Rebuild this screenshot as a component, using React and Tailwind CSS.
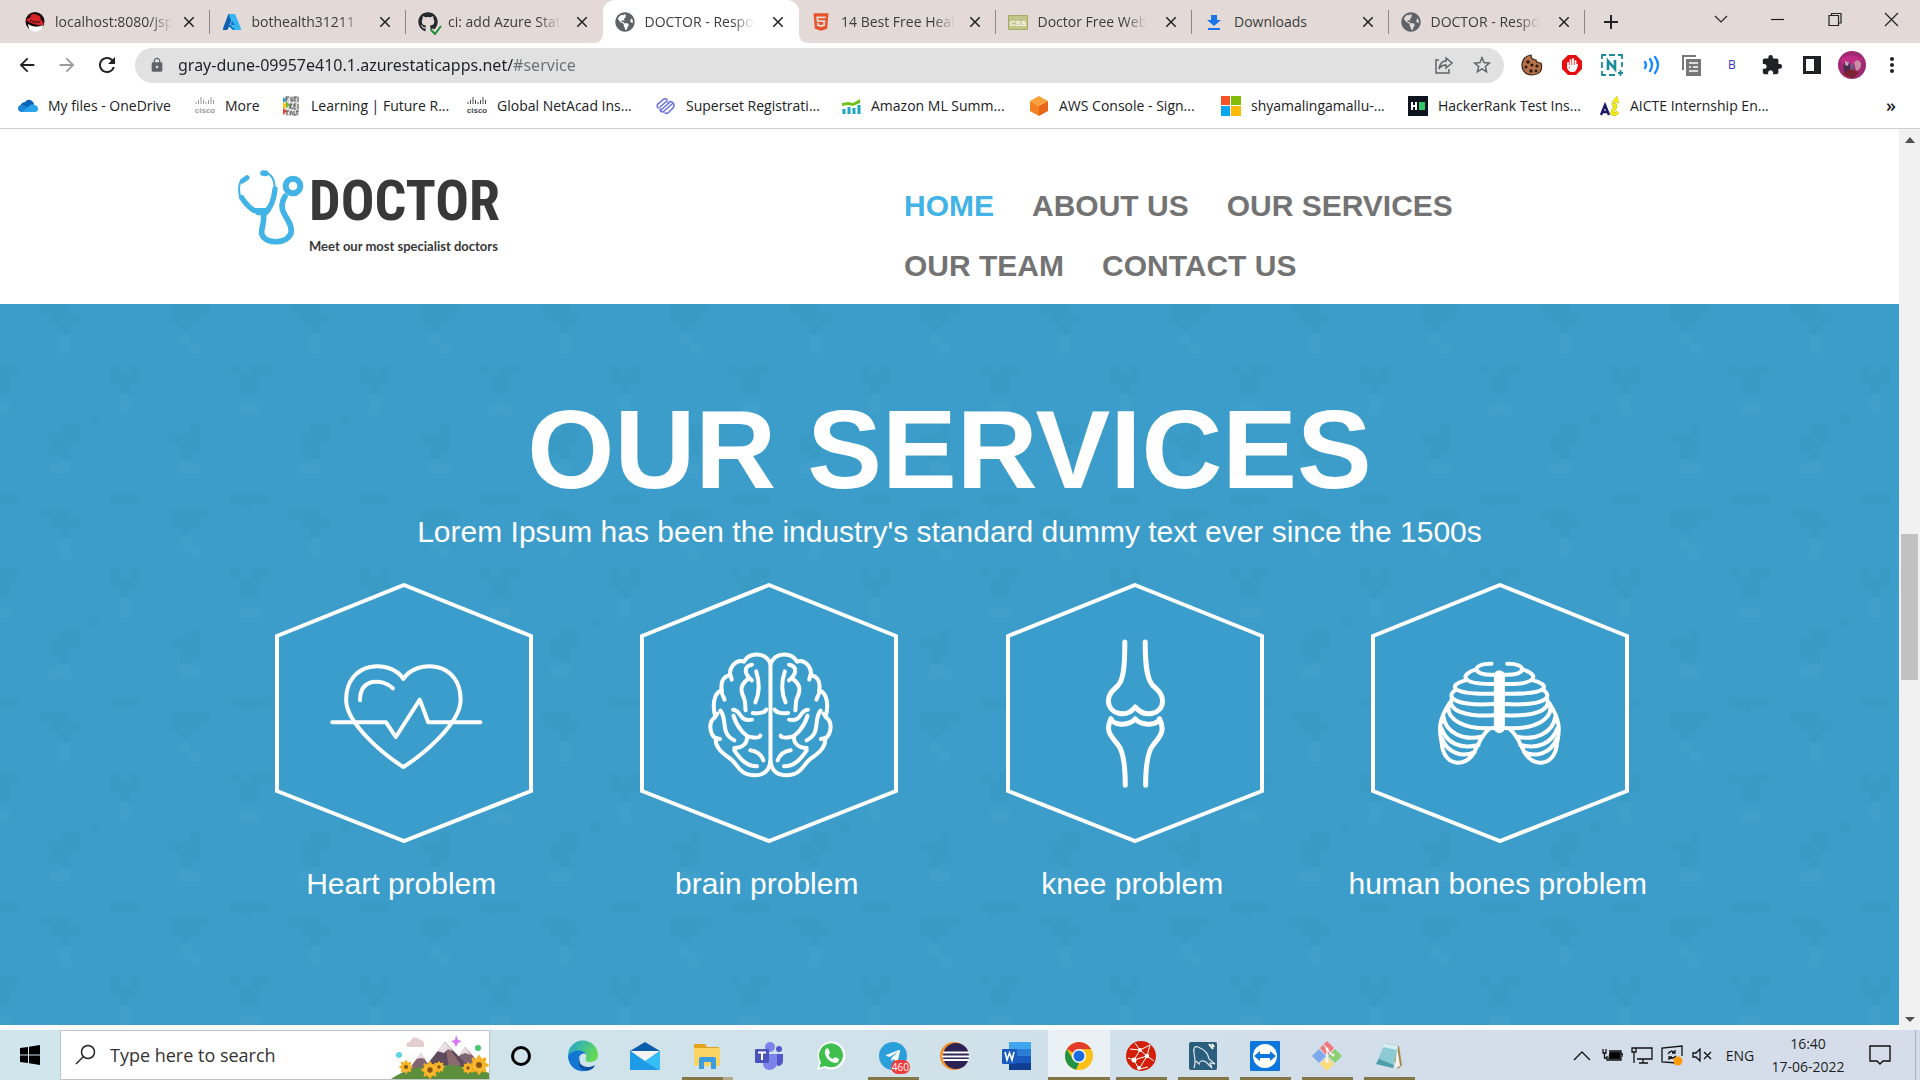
import React from "react";
import { FaTelegramPlane, FaHtml5, FaGlobeAmericas, FaGithub } from "react-icons/fa";
import { MdArrowBack, MdArrowForward, MdRefresh, MdLock, MdExtension, MdMoreVert, MdStarBorder, MdClose, MdAdd } from "react-icons/md";

/* ---------- small favicons ---------- */

const Globe = () => <FaGlobeAmericas className="h-5 w-5 text-[#5f6368]" />;

const RedHat = () => (
  <svg viewBox="0 0 20 20" className="h-5 w-5">
    <circle cx="10" cy="9.5" r="9.5" fill="#1b0a0a" />
    <path d="M3 12Q10 17 18 13L17 17Q10 22 4 17Z" fill="#fff" />
    <path d="M1 8Q2 6 5 6L6 3Q9 1 12 3L15 4L16 8Q20 11 18 13Q9 14 1 8Z" fill="#d8232a" />
    <path d="M5 8Q9 11 15 10" stroke="#1b0a0a" fill="none" strokeWidth="1" />
  </svg>
);

const Azure = () => (
  <svg viewBox="0 0 20 20" className="h-5 w-5">
    <path d="M7 2H12L6 17Q5.500 18 4.500 18H1.500Q0.500 18 1 16.500L6 3Q6.300 2 7 2Z" fill="#0f5fae" />
    <path d="M12 2H13L19 16.500Q19.500 18 18 18H13Q12 18 11.500 17L7 3Q7 2 8 2Z" fill="#35b4f2" />
    <path d="M5.500 13H13L10 9L8.500 12L13 18H11Z" fill="#0078d4" />
  </svg>
);

const GithubCheck = () => (
  <span className="relative block h-5 w-5">
    <FaGithub className="h-5 w-5 text-[#24292f]" />
    <svg viewBox="0 0 12 12" className="absolute -right-1 -bottom-1 h-3 w-3">
      <path d="M1 6L5 10L11 2" fill="none" stroke="#e3dad7" strokeWidth="5" />
      <path d="M1 6L5 10L11 2" fill="none" stroke="#1a8f36" strokeWidth="2" />
    </svg>
  </span>
);

const Html5 = () => <FaHtml5 className="h-5 w-5 text-[#e8532b]" />;

const CssBadge = () => (
  <svg viewBox="0 0 20 20" className="h-5 w-5">
    <rect y="3" width="20" height="15" rx="1" fill="#a9ab62" />
    <rect x="1" y="4" width="18" height="13" fill="#c3c48a" />
    <text x="10" y="14" fontSize="8" fontWeight="700" textAnchor="middle" fill="#fff" fontFamily="Liberation Sans, sans-serif">CSS</text>
  </svg>
);

const DownloadIcon = () => (
  <svg viewBox="0 0 20 20" className="h-5 w-5" fill="#1a73e8">
    <path d="M7 3H13V8H17L10 14L3 8H7Z" />
    <rect x="4" y="16" width="12" height="2" />
  </svg>
);

const tabs = [
  { title: "localhost:8080/jsp", Icon: RedHat },
  { title: "bothealth31211 -", Icon: Azure },
  { title: "ci: add Azure Stat", Icon: GithubCheck },
  { title: "DOCTOR - Respo", Icon: Globe, active: true },
  { title: "14 Best Free Heal", Icon: Html5 },
  { title: "Doctor Free Web", Icon: CssBadge },
  { title: "Downloads", Icon: DownloadIcon, full: true },
  { title: "DOCTOR - Respo", Icon: Globe },
];

const OneDrive = () => (
  <svg viewBox="0 0 20 20" className="h-5 w-5">
    <path d="M3 13Q1 7 7 6Q10 2 14 5Q16 6 16 9L9 14Z" fill="#0a63b8" />
    <path d="M4 16Q0 16 0 12Q1 8 6 9L14 15Z" fill="#1a84d8" />
    <path d="M10 11Q13 7 17 9Q20 10 20 13Q20 16 17 16H4Z" fill="#2aa4ea" />
  </svg>
);

const Cisco = ({ tone }) => (
  <svg viewBox="0 0 20 20" className="h-5 w-5" fill={tone} stroke={tone}>
    <path d="M1 6V8M3.500 4V8M6 1V8M8.500 4V8M11 6V8M13.500 4V8M16 1V8M18.500 4V8" strokeWidth="1" />
    <text x="10" y="17" fontSize="8" fontWeight="700" textAnchor="middle" stroke="none" fontFamily="Liberation Sans, sans-serif">cisco</text>
  </svg>
);

const FutureReady = () => (
  <svg viewBox="0 0 20 20" className="h-5 w-5">
    <rect x="4" width="14" height="20" fill="#ddd" />
    <path d="M2 1L5 4L2 7Z" fill="#1f9ad6" />
    <path d="M2 6L8 10L2 13Z" fill="#f6c515" />
    <path d="M2 12L6 15L2 19Z" fill="#e5432f" />
    <path d="M5 5L9 9L5 12Z" fill="#74b83e" />
    <path d="M5 1V6M5 1H8M5 3H7M10 1V5H12V1M14 1V6M13 1H16M17 1V6M9 13V8H11L9 11L12 13M13 8V13H15M13 8H15M13 10H15M17 8V13M5 15H8M6 15V19M9 19L10 15L12 19M13 15V19H15M16 15V19M15 15H18" fill="none" stroke="#555" strokeWidth="1" />
  </svg>
);

const Superset = () => (
  <svg viewBox="0 0 20 20" className="h-5 w-5" fill="none" stroke="#6b74e0" strokeWidth="1.600" strokeLinecap="round">
    <path d="M2 12Q0 9 3 7L8 3Q11 2 11 5L4 11M5 14L14 6M7 16L16 8M4 13Q4 16 7 16M9 17Q11 18 13 16L17 12Q19 9 17 7Q15 4 12 7" />
  </svg>
);

const AmazonMl = () => (
  <svg viewBox="0 0 20 20" className="h-5 w-5">
    <path d="M1 10V7L7 6L12 7L19 3V7L12 10L7 9Z" fill="#6fc31c" />
    <path d="M3 13V18M8 11V18M13 12V18M18 9V18" stroke="#1ba6c4" strokeWidth="3" />
  </svg>
);

const Aws = () => (
  <svg viewBox="0 0 20 20" className="h-5 w-5">
    <path d="M10 0L19 5L10 10L1 5Z" fill="#f9a13a" />
    <path d="M1 5L10 10V20L1 15Z" fill="#f58220" />
    <path d="M19 5L10 10V20L19 15Z" fill="#e8641b" />
  </svg>
);

const Microsoft = () => (
  <svg viewBox="0 0 20 20" className="h-5 w-5">
    <rect width="9" height="9" fill="#f35325" />
    <rect x="10" width="10" height="9" fill="#81bc06" />
    <rect y="10" width="9" height="10" fill="#05a6f0" />
    <rect x="10" y="10" width="10" height="10" fill="#ffba08" />
  </svg>
);

const HackerRank = () => (
  <svg viewBox="0 0 20 20" className="h-5 w-5">
    <rect width="20" height="20" fill="#0e141e" />
    <path d="M4 6V14M8 6V14M4 10H8" stroke="#fff" strokeWidth="2" />
    <rect x="11" y="6" width="6" height="8" fill="#2ec866" />
  </svg>
);

const Aicte = () => (
  <svg viewBox="0 0 20 20" className="h-5 w-5">
    <path d="M1 19L5 9L9 19M3 16H8" fill="none" stroke="#1c1763" strokeWidth="2.500" />
    <path d="M17 0L19 7L12 6Z" fill="#f7ec13" stroke="#c9bd12" strokeWidth="0.500" />
    <path d="M12 9Q17 8 15 12Q10 18 13 18Q15 19 18 16" fill="none" stroke="#b9ae18" strokeWidth="3.500" />
    <path d="M12 9Q17 8 15 12Q10 18 13 18Q15 19 18 16" fill="none" stroke="#f7ec13" strokeWidth="2.500" />
  </svg>
);

const bookmarks = [
  { label: "My files - OneDrive", icon: <OneDrive />, width: "w-[177px]" },
  { label: "More", icon: <Cisco tone="#9a9a9a" />, width: "w-[86px]" },
  { label: "Learning | Future R...", icon: <FutureReady />, width: "w-[186px]" },
  { label: "Global NetAcad Ins...", icon: <Cisco tone="#4a4a4a" />, width: "w-[189px]" },
  { label: "Superset Registrati...", icon: <Superset />, width: "w-[185px]" },
  { label: "Amazon ML Summ...", icon: <AmazonMl />, width: "w-[188px]" },
  { label: "AWS Console - Sign...", icon: <Aws />, width: "w-[192px]" },
  { label: "shyamalingamallu-...", icon: <Microsoft />, width: "w-[187px]" },
  { label: "HackerRank Test Ins...", icon: <HackerRank />, width: "w-[192px]" },
  { label: "AICTE Internship En...", icon: <Aicte />, width: "w-[187px]" },
];

/* ---------- browser chrome ---------- */

function Tab({ title, Icon, active, full, divider }) {
  return (
    <div className={active ? "relative flex min-w-0 flex-1 items-center rounded-t-xl bg-white pl-3" : "relative flex min-w-0 flex-1 items-center pl-3"}>
      {active && (
        <>
          <svg viewBox="0 0 10 10" className="absolute bottom-0 -left-[10px] h-[10px] w-[10px]"><path d="M10 0V10H0Q10 10 10 0Z" fill="#fff" /></svg>
          <svg viewBox="0 0 10 10" className="absolute -right-[10px] bottom-0 h-[10px] w-[10px]"><path d="M0 0V10H10Q0 10 0 0Z" fill="#fff" /></svg>
        </>
      )}
      <button className="flex h-full min-w-0 flex-1 items-center gap-[10px] text-left">
        <span className="shrink-0"><Icon /></span>
        <span className={full ? "text-[14px] whitespace-nowrap text-[#3c3c3c]" : "text-[14px] whitespace-nowrap text-[#3c3c3c] [mask-image:linear-gradient(to_right,#000_80%,transparent)]"}>{title}</span>
      </button>
      <button aria-label="Close tab" className="flex h-5 w-5 shrink-0 items-center justify-center text-[#202124]">
        <MdClose className="h-[18px] w-[18px]" />
      </button>
      <span className={divider ? "ml-[10px] h-6 w-px bg-[#8d8784]" : "ml-[10px] h-6 w-px"} />
    </div>
  );
}

function TabStrip() {
  return (
    <div className="flex h-[43px] bg-[#e3dad7] pl-[13px]">
      <div className="flex max-w-[1572px] min-w-0 flex-1">
        {tabs.map((t, i) => (
          <Tab key={i} {...t} divider={i !== 2 && i !== 3} />
        ))}
      </div>
      <button aria-label="New tab" className="flex w-[52px] items-center justify-center text-[#202124]"><MdAdd className="h-6 w-6" /></button>
      <div className="ml-auto flex h-[38px] items-center text-black">
        {[
          ["Search tabs", "M3 6L9 12L15 6"],
          ["Minimize", "M2 9.500H15"],
          ["Restore", "M3 5.500H12.500V15.500H3ZM5.500 5V3.500H15V13H13"],
          ["Close", "M2 3L15 16M15 3L2 16"],
        ].map(([name, d]) => (
          <button key={name} aria-label={name} className="flex h-full w-[57px] items-center justify-center">
            <svg viewBox="0 0 18 19" className="h-[19px] w-[18px]" fill="none" stroke="#222" strokeWidth="1.200"><path d={d} /></svg>
          </button>
        ))}
      </div>
    </div>
  );
}

const extensions = [
  ["Cookies", <svg viewBox="0 0 22 22" className="h-[22px] w-[22px]"><path d="M10 1Q10 6 15 6Q15 9 20 9Q23 20 11 21Q1 20 1 11Q2 2 10 1Z" fill="#b8734a" stroke="#3b2115" strokeWidth="1.200" /><g fill="#2c1810"><circle cx="7" cy="8" r="1.800" /><circle cx="5" cy="13" r="1.500" /><circle cx="11" cy="11" r="1.600" /><circle cx="10" cy="17" r="1.700" /><circle cx="16" cy="12" r="1.600" /><circle cx="15" cy="17" r="1.400" /></g></svg>],
  ["Ad block", <svg viewBox="0 0 22 22" className="h-[22px] w-[22px]"><path d="M7 1H15L21 7V15L15 21H7L1 15V7Z" fill="#e60f0f" /><path d="M7 9V14Q9 18 13 17Q15 16 16 11M9.500 12V6M12 12V5M14.500 12V7" stroke="#fff" strokeWidth="1.800" strokeLinecap="round" fill="none" /><path d="M8 11H15V15L12 17L9 16Z" fill="#fff" /></svg>],
  ["Capture", <svg viewBox="0 0 22 22" className="h-[22px] w-[22px]" fill="none" stroke="#1b8a9c" strokeWidth="1.800"><path d="M1 5V1H5M8 1H14M17 1H21V5M21 8V13M1 8V14M1 17V21H5M8 21H14M17 19H22M19.500 16V22" /><path d="M7 16V7L14 15V6" strokeWidth="2.600" /></svg>],
  ["Read aloud", <svg viewBox="0 0 22 22" className="h-[22px] w-[22px]" fill="none" stroke="#1a8cff" strokeWidth="2.400" strokeLinecap="round"><path d="M4 8Q6 11 4 14M9 5Q13 11 9 17M14 3Q20 11 14 19" /></svg>],
  ["Clipboard", <svg viewBox="0 0 22 22" className="h-[22px] w-[22px]"><path d="M2 16V2H15" fill="none" stroke="#777" strokeWidth="2" /><rect x="5" y="5" width="15" height="17" fill="#777" /><path d="M8 9H17M12 13H17M8 17H17M8 13H10" stroke="#fff" strokeWidth="1.500" /></svg>],
  ["B", <span className="text-xs text-[#3d32c4]">B</span>],
  ["Extensions", <MdExtension className="h-[22px] w-[22px] text-[#202124]" />],
  ["Side panel", <svg viewBox="0 0 20 20" className="h-5 w-5"><path d="M1 1H19V19H1ZM4 4V16H12V4Z" fill="#202124" fillRule="evenodd" /></svg>],
  ["Profile", <svg viewBox="0 0 28 28" className="h-7 w-7"><circle cx="14" cy="14" r="14" fill="#a02a72" /><path d="M3 8Q10 1 25 8L20 14L4 14Z" fill="#c02b86" /><path d="M6 12Q10 8 12 13V20L8 24Q4 18 6 12Z" fill="#4a2a4f" /><path d="M16 11Q20 7 23 12Q24 18 18 20Z" fill="#c78ea4" /><path d="M13 12L16 14L15 20L12 21Z" fill="#6d5a86" /><path d="M5 22L12 18L21 21L16 27Q9 27 5 22Z" fill="#7c2233" /><path d="M7 10L11 11L10 15L7 14Z" fill="#c9a0b8" /></svg>],
  ["Menu", <MdMoreVert className="h-6 w-6 text-[#202124]" />],
];

function Toolbar() {
  return (
    <div className="flex h-[44px] items-center bg-white pr-2 pl-[7px]">
      <button aria-label="Back" className="flex w-10 justify-center"><MdArrowBack className="h-[22px] w-[22px] text-[#202124]" /></button>
      <button aria-label="Forward" className="flex w-10 justify-center"><MdArrowForward className="h-[22px] w-[22px] text-[#9b9b9b]" /></button>
      <button aria-label="Reload" className="flex w-10 justify-center"><MdRefresh className="h-6 w-6 text-[#202124]" /></button>
      <div className="ml-2 flex h-[35px] flex-1 items-center rounded-full bg-[#e1e1e1] pr-1 pl-[14px]">
        <MdLock className="h-4 w-4 shrink-0 text-[#5f6368]" />
        <input
          aria-label="Address"
          defaultValue="gray-dune-09957e410.1.azurestaticapps.net/#service"
          className="ml-[13px] min-w-0 flex-1 bg-linear-to-r from-[#202124] from-[335px] to-[#6b6f74] to-[335px] bg-clip-text font-['Noto_Sans',sans-serif] text-[16px] text-transparent outline-none"
        />
        <button aria-label="Share" className="flex w-10 justify-center">
          <svg viewBox="0 0 20 20" className="h-5 w-5" fill="none" stroke="#5f6368" strokeWidth="1.500"><path d="M5 5H2V18H15V14M12 3L18 8L12 13V10Q7 10 5 14Q6 6 12 6Z" /></svg>
        </button>
        <button aria-label="Bookmark" className="flex w-9 justify-center"><MdStarBorder className="h-[22px] w-[22px] shrink-0 text-[#5f6368]" /></button>
      </div>
      <div className="ml-2 flex items-center">
        {extensions.map(([name, icon]) => (
          <button key={name} aria-label={name} className="flex w-10 items-center justify-center">{icon}</button>
        ))}
      </div>
    </div>
  );
}

function Bookmarks() {
  return (
    <div className="flex h-[42px] items-center border-b border-[#cfcfcf] bg-white pr-6 pb-1 pl-[18px] text-[14px] text-[#202124]">
      {bookmarks.map((b) => (
        <a key={b.label} href="#service" className={"flex shrink-0 items-center gap-[10px] whitespace-nowrap " + b.width}>
          {b.icon}
          {b.label}
        </a>
      ))}
      <button aria-label="More bookmarks" className="ml-auto text-[18px] font-semibold">»</button>
    </div>
  );
}

/* ---------- site ---------- */

function Logo() {
  return (
    <a href="#home" className="flex gap-1">
      <svg viewBox="108 115 204 234" className="h-[78px] w-[68px]" fill="none" stroke="#41b3e6" strokeLinecap="round" strokeLinejoin="round">
        <path d="M128 147Q108 160 117 200" strokeWidth="6" />
        <path d="M124 154L138 144" strokeWidth="15" />
        <path d="M190 128Q222 135 221 178" strokeWidth="6" />
        <path d="M186 130L194 131" strokeWidth="17" />
        <path d="M122 204Q140 232 160 243H196Q216 230 222 178" strokeWidth="16" />
        <path d="M162 240Q178 252 206 240L196 252H170Z" strokeWidth="10" fill="#41b3e6" />
        <path d="M188 258C190 285 178 300 183 315C195 344 258 344 270 310C278 268 222 250 252 200" strokeWidth="17" />
        <circle cx="276" cy="169" r="22" strokeWidth="18" />
      </svg>
      <span className="flex flex-col text-[#383838]">
        <span className="font-['Roboto_Condensed','Open_Sans_Condensed','Liberation_Sans_Narrow','Roboto',sans-serif] text-[56px] leading-[66px] font-bold">DOCTOR</span>
        <span className="font-['Lato',sans-serif] text-[13px] leading-[24px] font-bold">Meet our most specialist doctors</span>
      </span>
    </a>
  );
}

function SiteHeader() {
  return (
    <header className="bg-white">
      <div className="mx-auto flex h-[175px] max-w-[1425px] items-start justify-between">
        <div className="pt-[39px]"><Logo /></div>
        <nav className="flex w-full max-w-[758px] flex-wrap gap-x-[38px] pt-[47px] text-[30px] leading-[60px] font-bold text-[#737373]">
          <a href="#home" className="text-[#41b3e6]">HOME</a>
          <a href="#about">ABOUT US</a>
          <a href="#service" className="mr-40">OUR SERVICES</a>
          <a href="#team">OUR TEAM</a>
          <a href="#contact">CONTACT US</a>
        </nav>
      </div>
    </header>
  );
}

function PatternBackdrop() {
  return (
    <svg className="absolute inset-0 h-full w-full" aria-hidden="true">
      <defs>
        <pattern id="flowers" width="250" height="204" patternUnits="userSpaceOnUse">
          <g fill="#3a9ac6">
            <path d="M40 0H70V10H80V20H70V30H60V20H50V10H40Z" />
            <path d="M170 0H210V10H200V20H190V25H180V20H170Z" />
            <path d="M110 60H120V70H130V60H140V80H130V90H120V80H110Z" />
            <path d="M0 60H20V70H10V90H0Z M230 60H240V70H250V90H240V70H230Z" />
            <path d="M90 110H100V120H90Z" />
            <path d="M60 120H80V140H70V155H60V150H50V130H60Z" />
            <path d="M190 120H200V150H190V155H180V140H170V130H190Z" />
            <path d="M0 190H20V200H0Z M110 190H140V200H110Z M230 190H250V200H230Z M240 200H250V203H240Z" />
          </g>
          <g fill="#409fcb">
            <path d="M60 30H70V50H60Z M180 30H190V40H180Z M190 40H200V50H190Z M120 90H130V110H120Z M0 100H10V110H0Z M240 100H250V110H240Z" />
            <path d="M50 160H60V156H70V170H50Z M180 156H190V160H200V170H180Z" />
          </g>
        </pattern>
      </defs>
      <rect width="100%" height="100%" fill="url(#flowers)" />
    </svg>
  );
}

const thick = { vectorEffect: "non-scaling-stroke" };

const HeartDrawing = () => (
  <g transform="scale(0.4209 0.3333) translate(-36 -40)">
    <path style={thick} d="M341 328C312 268 205 272 205 390C205 462 296 556 341 592C386 556 477 462 477 390C477 272 370 268 341 328Z" />
    <path style={thick} d="M172 458H300L323 502L380 390L400 458H524M238 392C238 325 290 325 316 356" />
  </g>
);

const BrainHalf = () => (
  <>
    <path style={thick} d="M1216 282C1203 245 1165 248 1153 276C1134 268 1118 292 1120 317C1100 320 1098 345 1100 362C1080 370 1078 410 1085 442C1068 455 1070 490 1086 507C1084 540 1110 556 1125 572C1140 590 1145 617 1178 617C1205 617 1214 595 1216 575" />
    <path style={thick} d="M1120 312L1124 330M1100 360C1098 375 1105 380 1107 390M1085 440L1090 432M1086 505L1096 508" />
    <path style={thick} d="M1172 285C1150 290 1155 315 1172 332M1166 325C1142 345 1145 365 1153 385C1158 400 1155 410 1157 422M1182 305C1190 335 1190 370 1180 398" />
    <path style={thick} d="M1174 430C1190 432 1203 428 1206 420M1127 420C1147 420 1140 457 1172 450M1128 438C1135 470 1155 500 1168 502C1180 505 1190 505 1192 498M1160 500C1162 520 1150 535 1130 535" />
    <path style={thick} d="M1097 423C1115 450 1095 490 1130 512M1130 542C1145 570 1160 590 1184 590M1168 542C1185 545 1195 558 1199 572" />
  </>
);

const BrainDrawing = () => (
  <g transform="scale(0.4209 0.3333) translate(-906 -40)">
    <BrainHalf />
    <g transform="translate(2432 0) scale(-1 1)"><BrainHalf /></g>
    <path style={thick} d="M1216 280V580" />
  </g>
);

const KneeDrawing = () => (
  <g transform="scale(0.4337 0.3333) translate(-60 -40)">
    <path style={thick} strokeWidth="5" d="M334 217C334 290 331 330 318 348C303 366 296 375 296 395C298 432 336 448 358 412C382 448 420 432 421 395C421 375 414 366 399 348C385 330 381 290 381 217" />
    <path style={thick} strokeWidth="5" d="M335 647C335 590 331 545 318 525C303 500 288 485 302 447C306 466 342 472 358 448C374 472 412 466 414 447C428 485 415 500 400 525C386 545 382 590 382 647" />
  </g>
);

const RibHalf = () => (
  <path style={thick} d="M1182 282C1138 280 1132 318 1188 315M1145 300C1112 312 1105 345 1188 343M1122 332C1083 345 1080 375 1188 372M1100 360C1070 385 1105 410 1188 403M1090 388C1080 420 1120 442 1188 437M1083 410C1078 445 1115 482 1188 475M1085 400C1060 450 1060 480 1067 520C1070 590 1125 600 1145 540C1155 515 1160 495 1178 476M1071 440C1075 490 1120 515 1160 500M1066 475C1078 520 1110 540 1152 526M1067 505C1080 550 1115 565 1143 547" />
);

const RibsDrawing = () => (
  <g transform="scale(0.4337 0.3333) translate(-904 -40)" strokeWidth="4">
    <RibHalf />
    <g transform="translate(2400 0) scale(-1 1)"><RibHalf /></g>
    <path style={thick} strokeWidth="11" d="M1200 318V474" />
  </g>
);

const services = [
  { label: "Heart problem", Drawing: HeartDrawing },
  { label: "brain problem", Drawing: BrainDrawing },
  { label: "knee problem", Drawing: KneeDrawing },
  { label: "human bones problem", Drawing: RibsDrawing },
];

function Services() {
  return (
    <section className="relative bg-[#3c9dca] pt-[84px] pb-[121px] text-center text-white">
      <PatternBackdrop />
      <div className="relative">
        <h1 className="text-[112px] leading-[124px] font-bold">OUR SERVICES</h1>
        <p className="text-[30px] leading-[40px]">Lorem Ipsum has been the industry's standard dummy text ever since the 1500s</p>
        <ul className="mx-auto mt-[31px] grid max-w-[1462px] grid-cols-4">
          {services.map(({ label, Drawing }) => (
            <li key={label} className="flex flex-col items-center">
              <svg viewBox="0 0 258 260" className="ml-[5px] h-[260px] w-[258px]" fill="none" stroke="#fff" strokeWidth="4" strokeLinecap="round" strokeLinejoin="round">
                <path d="M129 2L256 53V208L129 258L2 208V53Z" fill="#3a9dcb" strokeWidth="4" strokeLinejoin="miter" />
                <Drawing />
              </svg>
              <h2 className="mt-[21px] text-[30px] leading-[40px]">{label}</h2>
            </li>
          ))}
        </ul>
      </div>
    </section>
  );
}

function Scrollbar() {
  return (
    <div className="flex w-[21px] shrink-0 flex-col items-center bg-[#f1f1f1]">
      <svg viewBox="0 0 20 20" className="h-5 w-5"><path d="M5 14L10 8L15 14Z" fill="#505050" /></svg>
      <div className="mt-[385px] h-[146px] w-[17px] bg-[#c1c1c1]" />
      <svg viewBox="0 0 20 20" className="mt-auto h-5 w-5"><path d="M5 7L10 12L15 7Z" fill="#505050" /></svg>
    </div>
  );
}

/* ---------- taskbar ---------- */

const Edge = () => (
  <svg viewBox="0 0 32 32" className="h-8 w-8">
    <defs>
      <linearGradient id="edgeTop" x1="0" y1="0" x2="1" y2="0.500"><stop offset="0" stopColor="#1fa2dc" /><stop offset="1" stopColor="#62d957" /></linearGradient>
    </defs>
    <path d="M1 16A15 15 0 0 1 31 15C31 20 27 22 23 22C19 22 18 20 19 18C22 10 6 8 1 16Z" fill="url(#edgeTop)" />
    <path d="M1 16C6 8 17 10 19 14C15 12 11 16 12 21C13 28 20 31 24 29C10 36 1 25 1 16Z" fill="#1276d3" />
    <path d="M13 17C10 25 19 30 28 25C26 31 18 32 15 29C11 26 11 20 13 17Z" fill="#0d4f9e" />
  </svg>
);

const Mail = () => (
  <svg viewBox="0 0 30 30" className="h-[30px] w-[30px]">
    <path d="M0 10L15 1L30 10V14H0Z" fill="#0b5cab" />
    <path d="M0 10H30L15 20Z" fill="#f4f4f4" />
    <path d="M0 10L15 20L30 29H0Z" fill="#1d9be6" />
    <path d="M30 10V29L15 20Z" fill="#35bdf5" />
  </svg>
);

const Folder = () => (
  <svg viewBox="0 0 30 30" className="h-[30px] w-[30px]">
    <path d="M2 3H13L15 6H27V12H2Z" fill="#e2a21b" />
    <rect x="2" y="7" width="26" height="18" rx="1" fill="#fcd462" />
    <path d="M7 28V18Q7 16 9 16H22Q24 16 24 18V28H19V21H12V28Z" fill="#3d9be0" />
  </svg>
);

const Teams = () => (
  <svg viewBox="0 0 30 30" className="h-[30px] w-[30px]">
    <circle cx="16" cy="6" r="5" fill="#7b83eb" />
    <circle cx="25" cy="8" r="3" fill="#5059c9" />
    <path d="M20 13H29V20Q29 25 23 25Z" fill="#5059c9" />
    <path d="M9 13H23V22Q22 29 15 29Q9 28 9 22Z" fill="#7b83eb" />
    <rect x="1" y="8" width="14" height="14" rx="1" fill="#4b53bc" />
    <path d="M4 11.500H12M8 11.500V19" stroke="#fff" strokeWidth="2" />
  </svg>
);

const Whatsapp = () => (
  <svg viewBox="0 0 30 30" className="h-[30px] w-[30px]">
    <path d="M1 29L3 21A14 14 0 1 1 9 27Z" fill="#fff" />
    <path d="M3.500 26.500L5 21A12 12 0 1 1 9.500 25Z" fill="#3fbf4d" />
    <path d="M10 8Q12 6 13 9L14 12Q12 13 13 15Q15 18 17 18L19 16L23 18Q23 22 19 22Q12 21 9 13Q8 10 10 8Z" fill="#fff" />
  </svg>
);

const Telegram = () => (
  <span className="relative flex h-7 w-7 items-center justify-center rounded-full bg-[#2a9fda]">
    <FaTelegramPlane className="h-4 w-4 text-white" />
    <span className="absolute -right-[3px] -bottom-1 rounded-full bg-[#ee3b3b] px-px text-[10px] leading-[14px] text-white">460</span>
  </span>
);

const Eclipse = () => (
  <svg viewBox="0 0 30 30" className="h-[30px] w-[30px]">
    <circle cx="14" cy="15" r="14" fill="#f6922b" />
    <circle cx="16" cy="15" r="13" fill="#2c2255" />
    <path d="M3 11.500H29M2 15.500H30M3 19H29" stroke="#fff" strokeWidth="2" />
  </svg>
);

const Word = () => (
  <svg viewBox="0 0 30 30" className="h-[30px] w-[30px]">
    <path d="M7 1H29V8H7Z" fill="#41a5ee" />
    <path d="M7 8H29V15H7Z" fill="#2b7cd3" />
    <path d="M7 15H29V22H7Z" fill="#185abd" />
    <path d="M7 22H29V29H7Z" fill="#103f91" />
    <rect x="0" y="8" width="15" height="15" rx="1" fill="#185abd" />
    <path d="M3 11L5 19L7.500 12L10 19L12 11" fill="none" stroke="#fff" strokeWidth="1.600" />
  </svg>
);

const Chrome = () => (
  <svg viewBox="0 0 30 30" className="h-[30px] w-[30px]">
    <circle cx="15" cy="15" r="14" fill="#fbc116" />
    <path d="M15 15L2.900 8A14 14 0 0 1 27.100 8H15Z" fill="#e33b2e" />
    <path d="M2.900 8L9 18.500L15 22L12 28.700A14 14 0 0 1 2.900 8Z" fill="#229342" />
    <circle cx="15" cy="15" r="7" fill="#fff" />
    <circle cx="15" cy="15" r="5.500" fill="#1a6be0" />
  </svg>
);

const RedNetwork = () => (
  <svg viewBox="0 0 30 30" className="h-[30px] w-[30px]">
    <circle cx="15" cy="15" r="15" fill="#d3200a" />
    <path d="M9 2L14 9L24 4L21 15L28 20M14 9L8 19L2 17M8 19L13 28L21 15M14 9L21 15L8 19M13 28L22 26M14 9L4 8" stroke="#fff" strokeWidth="1" fill="none" />
    <g fill="#fff"><circle cx="14" cy="9" r="2" /><circle cx="8" cy="19" r="2.500" /><circle cx="21" cy="15" r="2.200" /><circle cx="13" cy="27" r="2" /></g>
  </svg>
);

const MySql = () => (
  <svg viewBox="0 0 30 30" className="h-[30px] w-[30px]">
    <rect x="1" y="1" width="28" height="28" rx="2" fill="#2b5d7d" />
    <path d="M6 27Q8 22 6 12Q5 4 10 6Q20 10 21 18L27 23L22 22L24 27L18 21Q12 18 11 23L8 20" fill="none" stroke="#dfe9ef" strokeWidth="1.200" />
    <path d="M21 3L25 8M24 3L26 6" stroke="#fff" strokeWidth="2" />
  </svg>
);

const TeamViewer = () => (
  <svg viewBox="0 0 30 30" className="h-[30px] w-[30px]">
    <rect width="30" height="30" rx="1" fill="#0b76dc" />
    <circle cx="15" cy="15" r="12" fill="#fff" />
    <path d="M4 15L10 10V13H20V10L26 15L20 20V17H10V20Z" fill="#0b76dc" />
  </svg>
);

const Git = () => (
  <svg viewBox="0 0 30 30" className="h-[30px] w-[30px]">
    <path d="M15 0L22 7L17 13H13L8 7Z" fill="#f2787d" />
    <path d="M7 8L14 15L7 22L0 15Z" fill="#7fa9ea" />
    <path d="M23 8L30 15L23 22L16 15Z" fill="#8bcf72" />
    <path d="M15 16L22 23L15 30L8 23Z" fill="#fbdc7c" />
    <path d="M12 4L15 8V20M15 8L20 14" stroke="#fff" strokeWidth="1.200" fill="none" />
    <g fill="#fff"><circle cx="15" cy="8" r="1.500" /><circle cx="15" cy="20" r="1.800" /><circle cx="21" cy="14" r="1.500" /></g>
  </svg>
);

const Notepad = () => (
  <svg viewBox="0 0 30 30" className="h-[30px] w-[30px]">
    <path d="M12 2L25 5L28 24L24 28Z" fill="#a78a52" />
    <path d="M23 5L26 25L21 27Z" fill="#f5f5f0" />
    <path d="M11 2L24 5L19 27L2 23Z" fill="#8ccbd3" />
    <path d="M11 2L24 5L23 9L9 6Z" fill="#d7eef0" />
    <path d="M2 23L19 27L20 24L5 18Z" fill="#4d9eab" />
  </svg>
);

const apps = [
  ["Cortana", <span className="block h-5 w-5 rounded-full border-[3px] border-black" />, ""],
  ["Edge", <Edge />, ""],
  ["Mail", <Mail />, ""],
  ["File Explorer", <Folder />, "split"],
  ["Teams", <Teams />, ""],
  ["WhatsApp", <Whatsapp />, ""],
  ["Telegram", <Telegram />, "run"],
  ["Eclipse", <Eclipse />, ""],
  ["Word", <Word />, ""],
  ["Chrome", <Chrome />, "active"],
  ["Network", <RedNetwork />, "run"],
  ["MySQL Workbench", <MySql />, "run"],
  ["TeamViewer", <TeamViewer />, "run"],
  ["Git", <Git />, "run"],
  ["Notepad", <Notepad />, "run"],
];

function AppButton({ name, icon, state }) {
  return (
    <button aria-label={name} className={state === "active" ? "flex w-[62px] shrink-0 flex-col items-center bg-[#eaf1f6]" : "flex w-[62px] shrink-0 flex-col items-center"}>
      <span className="flex h-[47px] w-full items-center justify-center pt-1">{icon}</span>
      {state === "active" && <span className="h-[3px] w-full bg-[#837748]" />}
      {state === "run" && <span className="h-[3px] w-[51px] bg-[#837748]" />}
      {state === "split" && (
        <span className="flex h-[3px] w-[51px] bg-[#b0a98b]"><span className="w-[41px] bg-[#837748]" /></span>
      )}
    </button>
  );
}

const Flower = ({ x, y, r }) => (
  <g transform={`translate(${x} ${y}) scale(${r})`}>
    {[0, 45, 90, 135].map((a) => (
      <ellipse key={a} rx="10" ry="3" fill="#f5ac22" transform={`rotate(${a})`} />
    ))}
    <circle r="7" fill="#f8b72c" />
    <circle r="3" fill="#8a5514" />
  </g>
);

const Mountains = () => (
  <svg viewBox="0 0 98 48" className="h-[48px] w-[98px] shrink-0">
    <path d="M18 38L30 22L40 38Z M60 38L74 16L92 36Z" fill="#7f6672" />
    <path d="M34 36L54 11L80 38Z" fill="#5c4a5d" />
    <path d="M54 11L70 34L58 38Z" fill="#8d6a6c" />
    <path d="M46 20L54 11L62 20L57 18L53 22Z M25 28L30 22L35 28L30 27Z M69 24L74 16L80 24L74 22Z" fill="#eadfe4" />
    <path d="M0 48Q20 34 50 34Q80 34 98 42V48Z" fill="#5c8f3b" />
    <path d="M16 16Q14 11 19 11Q22 4 28 8Q34 9 33 16Z" fill="#e2cdd2" />
    <path d="M65 4L67 9L71 10L67 12L65 16L63 12L60 10L64 9Z" fill="#d774f5" />
    <circle cx="8" cy="24" r="3" fill="#60d3e6" />
    <circle cx="87" cy="17" r="3" fill="#46c96c" />
    <Flower x={15} y={36} r={0.7} />
    <Flower x={48} y={36} r={0.6} />
    <Flower x={39} y={39} r={0.9} />
    <Flower x={77} y={37} r={0.6} />
    <Flower x={88} y={34} r={1} />
  </svg>
);

const trayIcons = [
  ["Show hidden icons", <path d="M3 16L11 8L19 16" />],
  ["Battery", <><path d="M8 7H20V16H6V12M2 5V9H5V5M3.500 9V14H6M20 10H22V13" /><path d="M9 8.500H19V14.500H8Z" fill="#000" /></>],
  ["Network", <path d="M5 4H21V15H6M12 15V19M8 19H17M1 4H5V8H1ZM3 8V19" />],
  ["Sync", <><path d="M16 19L1 18V4L21 2V12" /><path d="M7 10Q10 5 14 9M14 6V9H11M15 12Q11 16 8 13M8 16V13H11" /><circle cx="17" cy="17" r="4.500" fill="#ff9a0a" stroke="none" /></>],
  ["Volume muted", <path d="M2 9H5L9 5V17L5 13H2ZM13 8L20 15M20 8L13 15" />],
];

function Taskbar() {
  return (
    <footer className="flex h-[50px] bg-linear-to-r from-[#cfe6ec] via-[#d0e1ea] to-[#d5dcea]">
      <button aria-label="Start" className="flex w-[60px] shrink-0 items-center justify-center">
        <svg viewBox="0 0 20 20" className="h-5 w-5"><path d="M0 3L8 2V9.500H0Z M9 1.800L20 0V9.500H9Z M0 10.500H8V18L0 17Z M9 10.500H20V20L9 18.200Z" /></svg>
      </button>
      <label className="flex w-[430px] shrink-0 items-center border border-[#bfc4c6] bg-white pl-[13px]">
        <svg viewBox="0 0 22 22" className="h-[22px] w-[22px] shrink-0" fill="none" stroke="#222" strokeWidth="1.500"><circle cx="14" cy="8" r="6.500" /><path d="M9.500 12.500L2 20" /></svg>
        <input aria-label="Search" placeholder="Type here to search" className="ml-[14px] min-w-0 flex-1 bg-transparent text-[18px] outline-none placeholder:text-[#333]" />
        <Mountains />
      </label>
      <div className="flex">
        {apps.map(([name, icon, state]) => (
          <AppButton key={name} name={name} icon={icon} state={state} />
        ))}
      </div>
      <div className="ml-auto flex items-center text-[#1d1d1d]">
        {trayIcons.map(([name, icon]) => (
          <button key={name} aria-label={name} className="flex w-[30px] justify-center">
            <svg viewBox="0 0 22 22" className="h-[22px] w-[22px]" fill="none" stroke="#111" strokeWidth="1.300">{icon}</svg>
          </button>
        ))}
        <button className="w-[46px] text-center text-[14px]">ENG</button>
        <button className="flex w-[90px] flex-col items-center text-[14px] leading-[23px]">
          <span>16:40</span>
          <span>17-06-2022</span>
        </button>
        <button aria-label="Notifications" className="flex w-[54px] justify-center">
          <svg viewBox="0 0 22 22" className="h-[22px] w-[22px]" fill="none" stroke="#111" strokeWidth="1.400"><path d="M1 2H21V17H14L11 20L8 17H1Z" /></svg>
        </button>
        <span className="mr-1 ml-2 h-[50px] w-px bg-[#a9b2bf]" />
      </div>
    </footer>
  );
}

export default function App() {
  return (
    <div className="flex min-h-screen flex-col bg-white font-['Open_Sans','Noto_Sans',sans-serif]">
      <TabStrip />
      <Toolbar />
      <Bookmarks />
      <div className="flex flex-1">
        <main className="min-w-0 flex-1 bg-white font-['Liberation_Sans',Arial,sans-serif]">
          <SiteHeader />
          <Services />
        </main>
        <Scrollbar />
      </div>
      <Taskbar />
    </div>
  );
}
